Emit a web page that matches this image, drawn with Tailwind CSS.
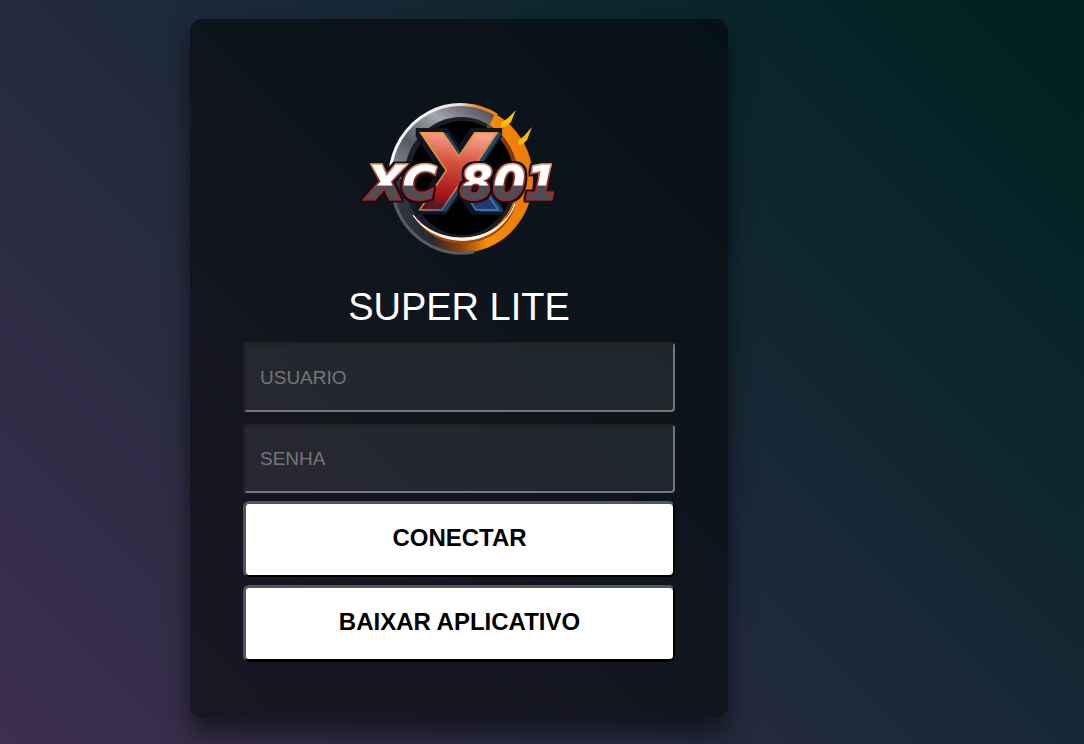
<!DOCTYPE html>
<html lang="pt-BR">
<head>
    <meta charset="UTF-8">
    <meta name="viewport" content="width=device-width, initial-scale=1.0">
    <title>XCX801 Super Lite</title>
    <script src="https://cdn.jsdelivr.net/npm/@tailwindcss/browser@4"></script>
</head>
<body class="min-h-screen overflow-hidden bg-[linear-gradient(225deg,#002020_0%,#002222_5%,#1b2939_48%,#242b3e_60%,#3d2f4d_100%)] font-['Liberation_Sans',Arial,sans-serif]">
    <main class="flex min-h-screen justify-center pt-[19px] pr-[166px] pb-[26px]">
        <form class="flex w-full max-w-[538px] flex-col items-center rounded-xl bg-black/50 px-[53px] pt-[71px] pb-14 shadow-[0_15px_25px_rgba(0,0,0,0.5)]">
            <!-- Logo -->
            <svg class="h-[175px] w-[220px] shrink-0" viewBox="0 0 220 175" role="img" aria-label="XCX801">
                <defs>
                    <linearGradient id="ring" x1="0" y1="0" x2="1" y2="0">
                        <stop offset="0" stop-color="#343844"/>
                        <stop offset=".3" stop-color="#2a2830"/>
                        <stop offset=".5" stop-color="#8b430c"/>
                        <stop offset=".68" stop-color="#f98c05"/>
                        <stop offset="1" stop-color="#e87906"/>
                    </linearGradient>
                    <linearGradient id="steel" x1="0" y1="1" x2="1" y2="0">
                        <stop offset="0" stop-color="#969ba6"/>
                        <stop offset=".35" stop-color="#555963"/>
                        <stop offset=".65" stop-color="#a4a6ae"/>
                        <stop offset="1" stop-color="#3b3d48"/>
                    </linearGradient>
                    <linearGradient id="rim" gradientUnits="userSpaceOnUse" x1="42" y1="0" x2="148" y2="0">
                        <stop offset="0" stop-color="#ffffff"/>
                        <stop offset=".65" stop-color="#e8e4e2"/>
                        <stop offset=".8" stop-color="#f08a20"/>
                        <stop offset="1" stop-color="#f58208"/>
                    </linearGradient>
                    <linearGradient id="red" gradientUnits="userSpaceOnUse" x1="100" y1="42" x2="90" y2="116">
                        <stop offset="0" stop-color="#f7a18a"/>
                        <stop offset=".4" stop-color="#d5523f"/>
                        <stop offset=".85" stop-color="#a5141c"/>
                        <stop offset="1" stop-color="#5c1320"/>
                    </linearGradient>
                    <linearGradient id="gold" gradientUnits="userSpaceOnUse" x1="66" y1="44" x2="100" y2="120">
                        <stop offset="0" stop-color="#eba02a"/>
                        <stop offset=".8" stop-color="#d8852a"/>
                        <stop offset="1" stop-color="#2a6a9c"/>
                    </linearGradient>
                    <linearGradient id="chrome" x1="0" y1="0" x2="0" y2="1">
                        <stop offset="0" stop-color="#ffffff"/>
                        <stop offset=".55" stop-color="#ffffff"/>
                        <stop offset=".56" stop-color="#4b4f55"/>
                        <stop offset="1" stop-color="#4b4f55"/>
                    </linearGradient>
                    <linearGradient id="edge" gradientUnits="userSpaceOnUse" x1="0" y1="74" x2="0" y2="110">
                        <stop offset="0" stop-color="#e0b080"/>
                        <stop offset=".4" stop-color="#a5302a"/>
                        <stop offset="1" stop-color="#a3252a"/>
                    </linearGradient>
                    <filter id="navyHalo" x="-20%" y="-20%" width="140%" height="140%">
                        <feMorphology in="SourceAlpha" operator="dilate" radius="4" result="wide"/>
                        <feFlood flood-color="#101722"/>
                        <feComposite in2="wide" operator="in" result="dark"/>
                        <feOffset in="SourceAlpha" dx="4" dy="1" result="side"/>
                        <feFlood flood-color="#1b466d"/>
                        <feComposite in2="side" operator="in" result="blue"/>
                        <feMerge>
                            <feMergeNode in="dark"/>
                            <feMergeNode in="blue"/>
                            <feMergeNode in="SourceGraphic"/>
                        </feMerge>
                    </filter>
                    <filter id="halo" x="-20%" y="-20%" width="140%" height="140%">
                        <feMorphology in="SourceAlpha" operator="dilate" radius="2" result="wide"/>
                        <feFlood flood-color="#141018"/>
                        <feComposite in2="wide" operator="in" result="dark"/>
                        <feMerge>
                            <feMergeNode in="dark"/>
                            <feMergeNode in="SourceGraphic"/>
                        </feMerge>
                    </filter>
                    <clipPath id="leg"><path d="M109 96H175V125H125Z"/></clipPath>
                </defs>
                <ellipse cx="112" cy="89" rx="72" ry="74" fill="url(#ring)"/>
                <path d="M40 89A72 74 0 0 1 146 24L138 40A54 57 0 0 0 58 89Z" fill="url(#steel)"/>
                <path d="M41 82A71 74 0 0 1 148 25" fill="none" stroke="url(#rim)" stroke-width="3"/>
                <path d="M45 110A70 74 0 0 0 125 162" fill="none" stroke="#555b68" stroke-width="3"/>
                <ellipse cx="112" cy="88" rx="57" ry="61" fill="#1c1d28"/>
                <path d="M138 34A57 61 0 0 1 169 90L162 96A55 58 0 0 0 138 38Z" fill="#84370d"/>
                <ellipse cx="113" cy="88" rx="52" ry="57" fill="#000000"/>
                <path d="M64 124C82 156 139 160 158 126L167 112C158 159 88 170 64 124Z" fill="#a44509"/>
                <path d="M64 125C85 158 147 163 166 114C151 154 91 160 64 125Z" fill="#fff5e8" stroke="#fff5e8" stroke-width="1"/>
                <path d="M152 33L159 28L167 20L162 32L158 36L152 37ZM169 51L175 46L183 37L178 50L174 54L170 55Z" fill="#ffbd08"/>

                <g font-family="'DejaVu Sans', sans-serif" font-weight="700" text-anchor="middle" stroke-linejoin="miter" paint-order="stroke">
                    <g font-size="103" filter="url(#navyHalo)">
                        <text x="110" y="119" fill="url(#red)" stroke="url(#gold)" stroke-width="3">X</text>
                        <text x="110" y="119" fill="#263970" stroke="#3d7aae" stroke-width="3" clip-path="url(#leg)">X</text>
                    </g>
                    <g font-size="47" font-style="italic" fill="url(#chrome)" stroke="url(#edge)" stroke-width="3" filter="url(#halo)">
                        <text x="53" y="109">XC</text>
                        <text x="160" y="109">801</text>
                    </g>
                </g>
            </svg>

            <h1 class="mt-5 text-[38px] leading-[44px] text-white">SUPER LITE</h1>

            <input type="text" name="usuario" aria-label="Usuario" placeholder="USUARIO" class="mt-[13px] h-[70px] w-full rounded border-2 border-t-[3px] border-l-[3px] border-t-[#222] border-r-[#767676] border-b-[#767676] border-l-[#222] bg-white/8 px-3.5 text-[19px] text-white placeholder:text-[#757575]">
            <input type="password" name="senha" aria-label="Senha" placeholder="SENHA" class="mt-3 h-[69px] w-full rounded border-2 border-t-[3px] border-l-[3px] border-t-[#222] border-r-[#767676] border-b-[#767676] border-l-[#222] bg-white/8 px-3.5 text-[19px] text-white placeholder:text-[#757575]">

            <button type="submit" class="mt-2 h-[76px] w-full rounded-md border-2 border-t-[3px] border-l-[3px] border-t-[#555] border-r-black border-b-black border-l-[#555] bg-white pb-1 text-2xl font-bold text-black">CONECTAR</button>
            <button type="button" class="mt-2 h-[77px] w-full rounded-md border-[3px] border-r-2 border-t-[#555] border-r-black border-b-black border-l-[#555] bg-white pb-1 text-2xl font-bold text-black">BAIXAR APLICATIVO</button>
        </form>
    </main>
</body>
</html>
